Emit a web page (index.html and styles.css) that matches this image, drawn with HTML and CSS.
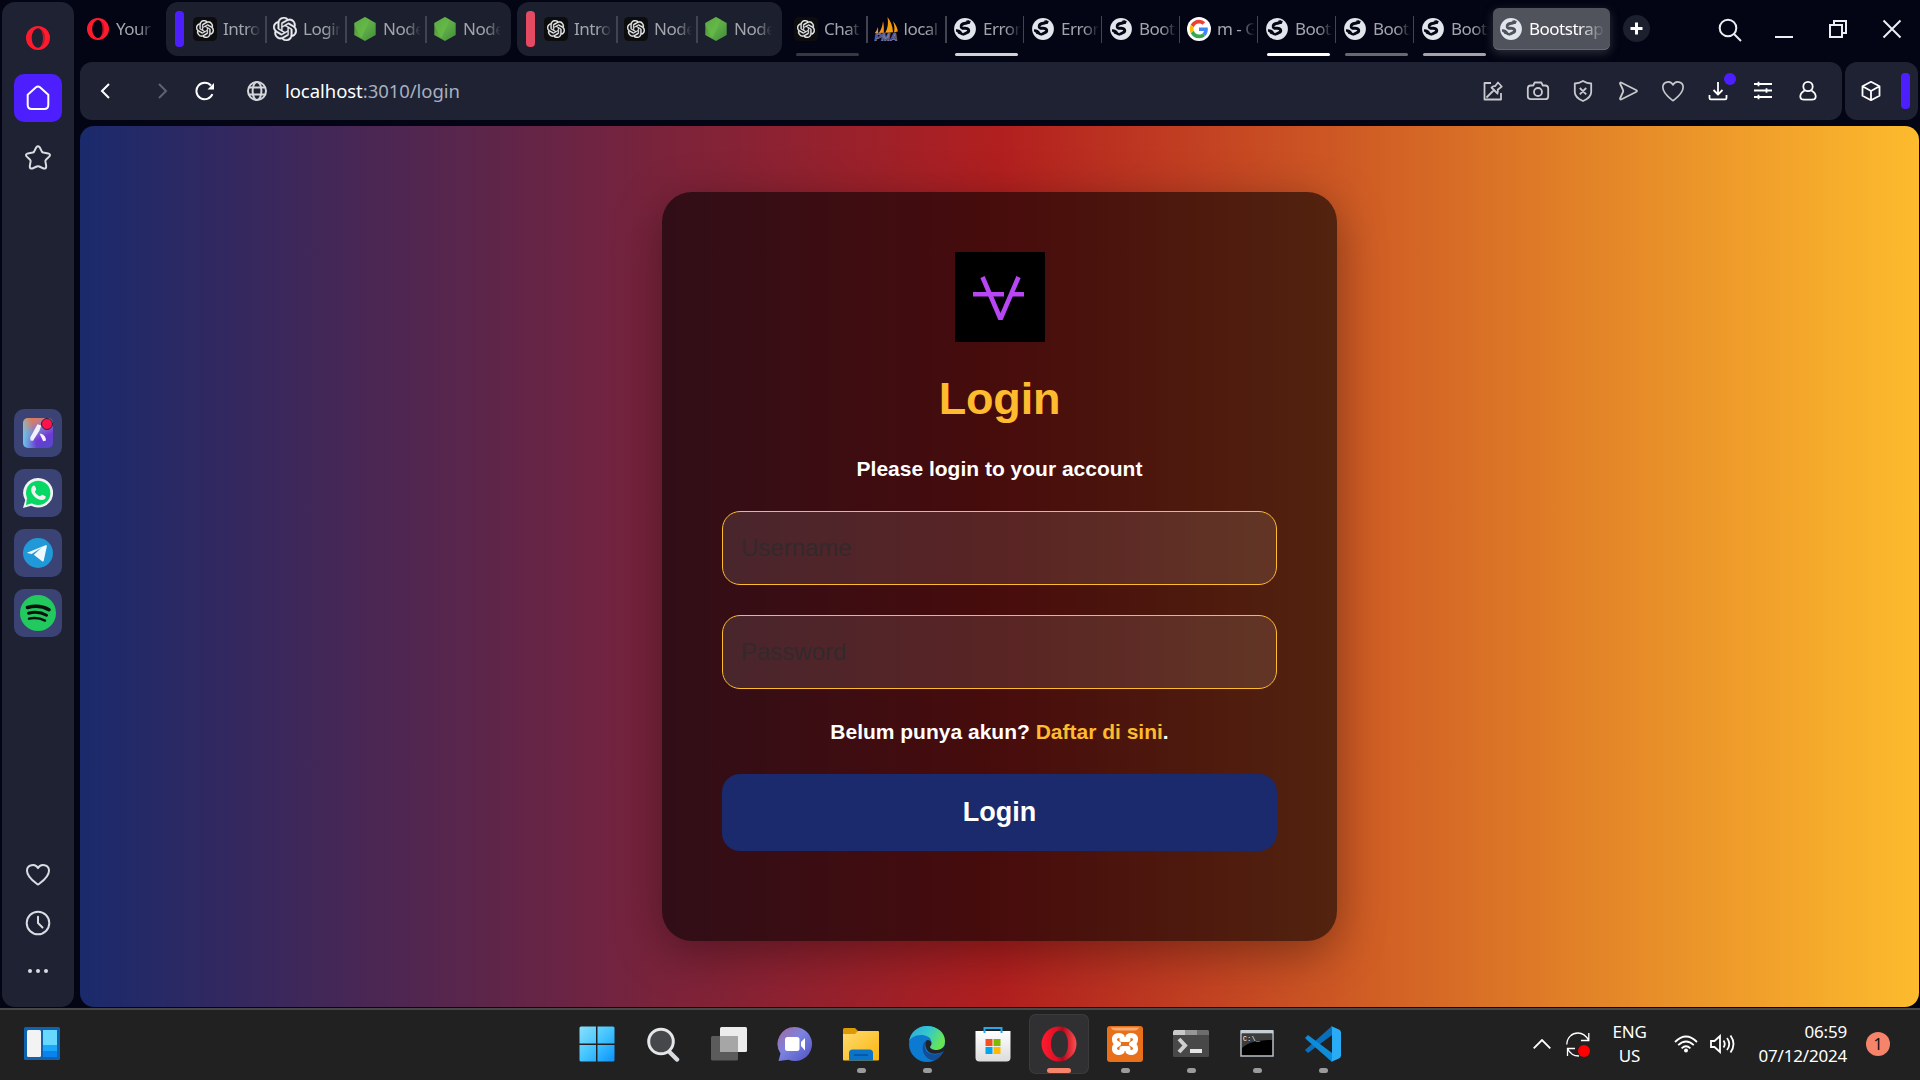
FILE: index.html
```html
<!DOCTYPE html>
<html lang="id">
<head>
<meta charset="utf-8">
<title>Login</title>
<link rel="stylesheet" href="styles.css">
</head>
<body>
<svg class="defs" width="0" height="0" aria-hidden="true">
  <defs>
    <linearGradient id="node-g" x1="0" y1="0" x2="1" y2="1"><stop offset="0" stop-color="#43873a"/><stop offset=".5" stop-color="#5fae45"/><stop offset="1" stop-color="#3f8b3d"/></linearGradient>
    <linearGradient id="win-g" x1="0" y1="0" x2="1" y2="1"><stop offset="0" stop-color="#8be0fb"/><stop offset=".5" stop-color="#44c4ff"/><stop offset="1" stop-color="#0a93fb"/></linearGradient>
    <linearGradient id="chat-g" x1="0" y1="0" x2="1" y2="1"><stop offset="0" stop-color="#a7679f"/><stop offset=".45" stop-color="#7b83df"/><stop offset="1" stop-color="#5150c4"/></linearGradient>
    <linearGradient id="folder-g" x1="0" y1="0" x2="1" y2="1"><stop offset="0" stop-color="#ffdb70"/><stop offset="1" stop-color="#f9b50d"/></linearGradient>
    <linearGradient id="edge-g" x1="0" y1="0" x2="1" y2=".4"><stop offset="0" stop-color="#2aa7e4"/><stop offset=".55" stop-color="#35c8cc"/><stop offset="1" stop-color="#68e555"/></linearGradient>
    <linearGradient id="opera-g" x1="0" y1="0" x2="1" y2="0"><stop offset="0" stop-color="#ff1b2d"/><stop offset=".45" stop-color="#dc1027"/><stop offset=".6" stop-color="#b3081c"/><stop offset="1" stop-color="#ff4e50"/></linearGradient>
    <linearGradient id="aria-g" x1="0" y1="0" x2=".5" y2="1"><stop offset="0" stop-color="#f07845"/><stop offset=".25" stop-color="#d07a72"/><stop offset=".5" stop-color="#7f7fce"/><stop offset=".8" stop-color="#7138d6"/><stop offset="1" stop-color="#5a45cc"/></linearGradient>
    <linearGradient id="aria-l" x1="0" y1=".7" x2="1" y2=".5"><stop offset="0" stop-color="#63dcea" stop-opacity=".8"/><stop offset=".4" stop-color="#63dcea" stop-opacity="0"/></linearGradient>
    <linearGradient id="paper-g" x1="0" y1="0" x2="0" y2="1"><stop offset="0" stop-color="#fff"/><stop offset="1" stop-color="#dcdcdc"/></linearGradient>
    <symbol id="opera" viewBox="0 0 24 24"><path fill="#ff1b2d" fill-rule="evenodd" d="M12 0a12 12 0 1 0 0 24 12 12 0 0 0 0-24zm0 2.2c3.2 0 5 4.4 5 9.8s-1.800 9.800-5 9.800-6.300-4.400-6.300-9.800S8.800 2.200 12 2.200z"/><path fill="#1b1420" opacity=".35" d="M14.500 3C17.800 4.500 19 8 18.800 12.600c-.3 4.600-1.800 7.200-4.300 8.400 2-1.400 2.900-5 2.900-9s-.9-7.600-2.900-9z"/></symbol>
    <symbol id="knot" viewBox="0 0 24 24"><path fill="currentColor" stroke="currentColor" stroke-width=".4" d="M22.2819 9.8211a5.9847 5.9847 0 0 0-.5157-4.9108 6.0462 6.0462 0 0 0-6.5098-2.9A6.0651 6.0651 0 0 0 4.9807 4.1818a5.9847 5.9847 0 0 0-3.9977 2.9 6.0462 6.0462 0 0 0 .7427 7.0966 5.98 5.98 0 0 0 .511 4.9107 6.051 6.051 0 0 0 6.5146 2.9001A5.9847 5.9847 0 0 0 13.2599 24a6.0557 6.0557 0 0 0 5.7718-4.2058 5.9894 5.9894 0 0 0 3.9977-2.9001 6.0557 6.0557 0 0 0-.7475-7.0729zm-9.022 12.6081a4.4755 4.4755 0 0 1-2.8764-1.0408l.1419-.0804 4.7783-2.7582a.7948.7948 0 0 0 .3927-.6813v-6.7369l2.02 1.1686a.071.071 0 0 1 .038.052v5.5826a4.504 4.504 0 0 1-4.4945 4.4944zm-9.6607-4.1254a4.4708 4.4708 0 0 1-.5346-3.0137l.142.0852 4.783 2.7582a.7712.7712 0 0 0 .7806 0l5.8428-3.3685v2.3324a.0804.0804 0 0 1-.0332.0615L9.74 19.9502a4.4992 4.4992 0 0 1-6.1408-1.6464zM2.3408 7.8956a4.485 4.485 0 0 1 2.3655-1.9728V11.6a.7664.7664 0 0 0 .3879.6765l5.8144 3.3543-2.0201 1.1685a.0757.0757 0 0 1-.071 0l-4.8303-2.7865A4.504 4.504 0 0 1 2.3408 7.872zm16.5963 3.8558L13.1038 8.364 15.1192 7.2a.0757.0757 0 0 1 .071 0l4.8303 2.7913a4.4944 4.4944 0 0 1-.6765 8.1042v-5.6772a.79.79 0 0 0-.407-.667zm2.0107-3.0231l-.142-.0852-4.7735-2.7818a.7759.7759 0 0 0-.7854 0L9.409 9.2297V6.8974a.0662.0662 0 0 1 .0284-.0615l4.8303-2.7866a4.4992 4.4992 0 0 1 6.6802 4.66zM8.3065 12.863l-2.02-1.1638a.0804.0804 0 0 1-.038-.0567V6.0742a4.4992 4.4992 0 0 1 7.3757-3.4537l-.142.0805L8.704 5.459a.7948.7948 0 0 0-.3927.6813zm1.0976-2.3654l2.602-1.4998 2.6069 1.4998v2.9994l-2.5974 1.4997-2.6067-1.4997Z"/></symbol>
    <symbol id="knot-dark" viewBox="0 0 24 24"><rect width="24" height="24" rx="4.500" fill="#0d0d0d"/><use href="#knot" x="3" y="3" width="18" height="18"/></symbol>
    <symbol id="node" viewBox="0 0 24 24"><path fill="url(#node-g)" d="M12 0l10.700 6v12L12 24 1.300 18V6z"/><path fill="#6cc24a" d="M12 0L1.300 6v2L8 21.500 17 2.800z" opacity=".55"/></symbol>
    <symbol id="globe" viewBox="0 0 24 24"><circle cx="12" cy="12" r="10.900" fill="#e1e6ec"/><g fill="none" stroke="var(--sea,#050716)" stroke-linejoin="round"><path stroke-width="2.900" d="M16.500 4.600L12.500 6.300Q8 6.800 8.200 9.700q.3 1.700 3 1.600 3.300-.3 4.300 1.200.9 2-1.700 3.300l-3 1.500"/><path stroke-width="2.600" d="M3 13.500q3.500-.2 4.700 2.200.6 1.600 3.300 1.800"/></g><path fill="var(--sea,#050716)" d="M2.800 13l4 1.200 2 3.300-3.300-.5zM13.500 3.200l4.300.8-1 2.800-3 .5z"/></symbol>
    <symbol id="pma" viewBox="0 0 24 24"><path fill="#f89c0e" d="M11.200 15.800C14 11 14.500 6 13.500 0c3 4 5.300 9 5.500 15.300zM20 15.200c.8-3 .5-7-1-11 3 3.500 4.500 7 4.800 10.200z"/><path fill="#f3921c" d="M4.800 16c2.700-3.600 3.800-7.600 4.200-12 .9 4 1 8 .8 11.700zM.8 16c1.500-1.600 2.400-3.600 3-6 .5 2 .4 4 .1 6z"/><text x="0.500" y="23.700" font-size="10.500" font-family="Liberation Sans" font-weight="700" font-style="italic" fill="#3b3e70" stroke="#a9abd0" stroke-width=".45" textLength="22.500">PMA</text></symbol>
    <symbol id="google" viewBox="0 0 48 48"><circle cx="24" cy="24" r="24" fill="#fff"/><g transform="translate(5.500 5.500) scale(.77)"><path fill="#EA4335" d="M24 9.500c3.540 0 6.710 1.220 9.210 3.600l6.850-6.850C35.900 2.380 30.470 0 24 0 14.620 0 6.510 5.380 2.560 13.220l7.980 6.190C12.430 13.720 17.740 9.500 24 9.500z"/><path fill="#4285F4" d="M46.980 24.550c0-1.570-.15-3.090-.38-4.550H24v9.020h12.940c-.58 2.960-2.260 5.480-4.780 7.180l7.730 6c4.510-4.180 7.090-10.360 7.090-17.650z"/><path fill="#FBBC05" d="M10.530 28.590c-.48-1.450-.76-2.990-.76-4.590s.27-3.140.76-4.590l-7.980-6.190C.92 16.460 0 20.120 0 24c0 3.880.92 7.540 2.560 10.780l7.970-6.190z"/><path fill="#34A853" d="M24 48c6.480 0 11.930-2.130 15.890-5.810l-7.730-6c-2.150 1.450-4.920 2.300-8.160 2.300-6.260 0-11.570-4.220-13.470-9.910l-7.980 6.190C6.510 42.620 14.620 48 24 48z"/></g></symbol>
    <symbol id="heart" viewBox="0 0 26 26"><path d="M13 23.500C10 21 2 16 2 9a5.800 5.800 0 0 1 11-2.600A5.800 5.800 0 0 1 24 9c0 7-8 12-11 14.500z"/></symbol>
  </defs>
</svg>

<div class="desktop">
  <div class="browser">
    <aside class="sidebar">
      <svg class="brand" viewBox="0 0 24 24"><use href="#opera"/></svg>
      <a class="side-btn home"><svg class="line" width="24" height="26" viewBox="0 0 24 26"><path d="M1.700 9.800L10 2.300q2-1.700 4 0l8.300 7.500V20q0 4-4 4H5.700q-4 0-4-4z"/></svg></a>
      <a class="side-btn star"><svg class="line dim" width="28" height="28" viewBox="0 0 28 28"><path d="M12.300 3.300q1.700-2 3.400 0l2.200 4.300q.5.800 1.400 1l4.900.8q2.800.8 1.200 3l-3.500 3.400q-.6.700-.5 1.600l.8 4.800q.1 2.800-2.600 2.300l-4.300-2q-1.300-.6-2.600 0l-4.300 2q-2.700.5-2.600-2.300l.8-4.800q.1-.9-.5-1.600l-3.500-3.400q-1.600-2.200 1.200-3l4.900-.8q.9-.2 1.400-1z"/></svg></a>
      <div class="apps">
        <a class="side-btn app"><svg width="30" height="30" viewBox="0 0 30 30"><rect width="30" height="30" rx="5" fill="url(#aria-g)"/><rect width="30" height="30" rx="5" fill="url(#aria-l)"/><path fill="#f3f0fa" d="M14.500 6.200l3.800 1.300-2 5.500-6.300 9.800-2.500-.2-.3-3z"/><path fill="#f3f0fa" d="M16.500 15.600c4 .4 6.300 3 6.500 6.900l-2.800.8z"/></svg><i class="alert"></i></a>
        <a class="side-btn app"><svg width="30" height="30" viewBox="0 0 30 30"><path fill="#f1f3f3" d="M15.200 0a14.800 14.800 0 1 1-7 27.800L0 30l2.200-7.800A14.800 14.800 0 0 1 15.200 0z"/><circle cx="15.200" cy="14.900" r="12.200" fill="#06d765"/><path fill="#06d765" d="M4 20l-1 7 7-2z"/><path fill="#f1f3f3" d="M9.500 8.200c1-1 2-.8 2.500.1l1.200 2.800c.3.800-1.400 2.200-1.200 2.800 1 2 2.600 3.500 4.700 4.400.8.300 2-1.800 2.800-1.500l2.900 1.400c.8.500.2 2-.6 2.800-4.500 3.700-14.500-3.500-13.600-9.700.1-1.200.6-2.300 1.300-3.100z"/></svg></a>
        <a class="side-btn app"><svg width="30" height="30" viewBox="0 0 30 30"><circle cx="15" cy="15" r="15" fill="#2199d8"/><path fill="#fff" opacity=".93" d="M4 14.800l18.500-7.500c1-.3 1.500.1 1.300 1.200l-3 14c-.2 1-.9 1.200-1.700.7l-8.300-6.500 7.600-6.900-9.700 6.300-4.600-1q-.5-.1-.1-.3z"/></svg></a>
        <a class="side-btn app"><svg width="36" height="36" viewBox="0 0 36 36"><circle cx="18" cy="18" r="18" fill="#22c95e"/><g fill="none" stroke="#0c1110" stroke-linecap="round"><path stroke-width="3.600" d="M7.500 12.500c7-2 15.500-1.300 21.500 2.200"/><path stroke-width="3" d="M8.500 18.200c6-1.600 13-.9 18 2"/><path stroke-width="2.400" d="M9 23.700c5.500-1.200 11-.7 16 1.900"/></g></svg></a>
      </div>
      <div class="side-end">
        <svg class="line dim" width="26" height="25" viewBox="0 0 26 26" preserveAspectRatio="none"><use href="#heart"/></svg>
        <svg class="line dim" width="26" height="26" viewBox="0 0 26 26"><circle cx="13" cy="13" r="11.300"/><path d="M13 6.800V13l4.500 4.500"/></svg>
        <svg width="22" height="6" viewBox="0 0 22 6" fill="#d9dce3"><circle cx="3" cy="3" r="2"/><circle cx="11" cy="3" r="2"/><circle cx="19" cy="3" r="2"/></svg>
      </div>
    </aside>

    <div class="column">
      <header class="tabs">
        <div class="tab first"><svg class="fav small"><use href="#opera"/></svg><span class="label">Your</span></div>
        <div class="group g1">
          <i class="bar violet"></i>
          <div class="tab"><svg class="fav"><use href="#knot-dark"/></svg><span class="label">Intro</span></div>
          <div class="tab sep"><svg class="fav"><use href="#knot"/></svg><span class="label">Login</span></div>
          <div class="tab sep"><svg class="fav"><use href="#node"/></svg><span class="label">Node</span></div>
          <div class="tab sep"><svg class="fav"><use href="#node"/></svg><span class="label">Node</span></div>
        </div>
        <div class="group g2">
          <i class="bar pink"></i>
          <div class="tab"><svg class="fav"><use href="#knot-dark"/></svg><span class="label">Intro</span></div>
          <div class="tab sep"><svg class="fav"><use href="#knot-dark"/></svg><span class="label">Node</span></div>
          <div class="tab sep"><svg class="fav"><use href="#node"/></svg><span class="label">Node</span></div>
        </div>
        <div class="loose">
          <div class="tab wide"><svg class="fav"><use href="#knot-dark"/></svg><span class="label">Chat</span><i class="under u1"></i></div>
          <div class="tab wide sep"><svg class="fav"><use href="#pma"/></svg><span class="label">local</span></div>
          <div class="tab sep"><svg class="fav"><use href="#globe"/></svg><span class="label">Error</span><i class="under u2"></i></div>
          <div class="tab sep thin"><svg class="fav"><use href="#globe"/></svg><span class="label">Error</span></div>
          <div class="tab sep thin"><svg class="fav"><use href="#globe"/></svg><span class="label">Boots</span></div>
          <div class="tab sep thin"><svg class="fav"><use href="#google"/></svg><span class="label">m - G</span></div>
          <div class="tab sep thin"><svg class="fav"><use href="#globe"/></svg><span class="label">Boots</span><i class="under u3"></i></div>
          <div class="tab sep thin"><svg class="fav"><use href="#globe"/></svg><span class="label">Boots</span><i class="under u4"></i></div>
          <div class="tab sep thin"><svg class="fav"><use href="#globe"/></svg><span class="label">Boots</span><i class="under u5"></i></div>
        </div>
        <div class="tab active"><svg class="fav"><use href="#globe"/></svg><span class="label">Bootstrap</span></div>
        <a class="add"><svg width="13" height="13" viewBox="0 0 13 13"><path d="M6.500.5v12M.5 6.500h12" stroke="#fff" stroke-width="3"/></svg></a>
        <div class="window-btns">
          <svg width="24" height="24" viewBox="0 0 24 24"><circle cx="10" cy="10" r="8.300"/><path d="M16 16l7 7"/></svg>
          <svg width="20" height="20" viewBox="0 0 20 20"><path d="M1 18h18"/></svg>
          <svg width="20" height="20" viewBox="0 0 20 20"><path d="M2 6h12v12H2zM6 6V2h12v12h-4"/></svg>
          <svg width="20" height="20" viewBox="0 0 20 20"><path d="M1.500 1.500l17 17M18.500 1.500l-17 17"/></svg>
        </div>
      </header>

      <div class="toolbar">
        <div class="address">
          <svg class="nav back" width="10" height="16" viewBox="0 0 10 16"><path d="M9 1L2 8l7 7"/></svg>
          <svg class="nav fwd" width="10" height="16" viewBox="0 0 10 16"><path d="M1 1l7 7-7 7"/></svg>
          <svg class="nav reload" width="20" height="20" viewBox="0 0 20 20"><path d="M17.400 13.200A8.300 8.300 0 1 1 16 4.500"/><path fill="#fff" stroke="none" d="M19 2v6.500h-6.500z"/></svg>
          <svg class="nav site" width="20" height="20" viewBox="0 0 20 20"><circle cx="10" cy="10" r="9"/><ellipse cx="10" cy="10" rx="4.400" ry="9"/><path d="M1.800 6.600h16.400M1.800 13.400h16.400"/></svg>
          <div class="url"><b>localhost</b>:3010/login</div>
          <div class="tools">
            <svg viewBox="0 0 24 24"><path d="M10 4H3.500v16.500H20V14M5.500 18.500l7-7M10.500 8.500l6 6q1-2 .2-3.800l4-3.200L17 3.500l-3 3.700q-2-.3-3.500 1.300z"/></svg>
            <svg viewBox="0 0 24 24"><path d="M1.800 9.500q0-3 3-3h2.400l1.500-3h6.600l1.500 3h2.400q3 0 3 3v7.700q0 3-3 3H4.800q-3 0-3-3z"/><circle cx="12" cy="13" r="4"/></svg>
            <svg viewBox="0 0 24 24"><path d="M12 2q4 2.500 8.200 2.500V13q0 5.500-8.200 9-8.200-3.500-8.200-9V4.500Q8 4.500 12 2zM8.800 9l6.400 6.400M15.200 9l-6.400 6.400"/></svg>
            <svg viewBox="0 0 24 24"><path d="M4 4.500q0-1.500 1.600-.8L20 11q2 1 0 2L5.600 20.300q-1.600.7-1.600-.8l3-6.500q.5-1 0-2z"/></svg>
            <svg viewBox="0 0 26 26"><use href="#heart"/></svg>
            <span class="badged"><svg class="bright" viewBox="0 0 24 24"><path d="M12 3v12M7.500 11l4.500 4.500 4.500-4.500M3.500 16v3q0 1.300 1.300 1.300h14.400q1.300 0 1.300-1.300v-3"/></svg><i></i></span>
            <svg class="bright" viewBox="0 0 24 24"><path d="M3 5h18M3 11.500h18M3 18h18M7.500 2.800v4.400M15.500 9.300v4.400M7.500 15.800v4.400"/></svg>
            <svg class="bright" viewBox="0 0 24 24"><circle cx="12" cy="7.500" r="4.700"/><path d="M8.700 11.500Q4 14 4.300 18q.3 2.700 4 2.700h7.400q3.700 0 4-2.700.3-4-4.400-6.500"/></svg>
          </div>
        </div>
        <div class="extra">
          <svg width="20" height="22" viewBox="0 0 20 22"><path d="M10 1.800l8.500 4.400v9.600L10 20.200l-8.500-4.400V6.200zM1.500 6.200L10 11l8.500-4.800M10 11v9"/></svg>
          <i></i>
        </div>
      </div>

      <main class="page">
        <form class="card">
          <svg class="logo" viewBox="0 0 90 90"><rect width="90" height="90"/><g fill="none" stroke="#b946f5" stroke-width="4.600"><path d="M27.500 25L45.500 67 63.500 25" stroke-linejoin="bevel"/><path d="M18 42.200h31M57 42.200h12"/></g></svg>
          <h1>Login</h1>
          <p class="lead">Please login to your account</p>
          <input type="text" placeholder="Username">
          <input type="password" placeholder="Password">
          <p class="signup">Belum punya akun? <a>Daftar di sini</a>.</p>
          <button type="button">Login</button>
        </form>
      </main>
    </div>
  </div>

  <footer class="taskbar">
    <div class="widgets"><svg width="36" height="33" viewBox="0 0 36 33"><rect width="36" height="33" rx="1.500" fill="#0f62b0"/><rect x="3" y="3" width="14" height="27" rx="1.500" fill="#f3f3f3"/><path fill="#67d8ff" d="M19 3h14v15H19z"/><path fill="#1aa7fb" d="M19 18h14v6H19z"/><path fill="#0a83ec" d="M19 24h14v6H19z"/></svg></div>
    <nav class="dock">
      <a><svg viewBox="0 0 36 36"><path fill="url(#win-g)" d="M.5 2a1.500 1.500 0 0 1 1.500-1.500h15v17H.5zM18.500.5h15.500a1.500 1.500 0 0 1 1.500 1.500v15.500h-17zM.5 19h16.500v16.500H2A1.500 1.500 0 0 1 .5 34zM18.500 19h17v15a1.500 1.500 0 0 1-1.500 1.500H18.500z"/></svg></a>
      <a><svg viewBox="0 0 36 36"><path d="M23.500 25l8.500 8.500" stroke="#d8dbdd" stroke-width="4.500" stroke-linecap="round"/><circle cx="16" cy="15.500" r="12.300" fill="#45474a" stroke="#e4e6e8" stroke-width="3"/></svg></a>
      <a><svg viewBox="0 0 36 36"><rect x="9" y="1" width="27" height="25" rx="1.500" fill="#ececec"/><rect y="10" width="27" height="24.500" rx="1.500" fill="#5b5b5b"/><path fill="#a6a6a6" d="M9 10h18v16H9z"/></svg></a>
      <a><svg viewBox="0 0 36 36"><path fill="url(#chat-g)" d="M18 1a17 17 0 1 1-6.500 32.700L1.500 35l2-7.500A17 17 0 0 1 18 1z"/><rect x="8" y="11" width="14.500" height="14" rx="2.500" fill="#fff"/><path fill="#fff" d="M24 16l4-4v12.500L24 20z"/></svg></a>
      <a class="on"><svg viewBox="0 0 36 36"><path fill="#dc9a06" d="M0 3.500A1.500 1.500 0 0 1 1.500 2H12l4 4-4 4H0z"/><path fill="url(#folder-g)" d="M0 8h12l3-3h20a1 1 0 0 1 1 1v27.500a1 1 0 0 1-1 1H1a1 1 0 0 1-1-1z"/><path fill="#0a74cb" d="M6 34.500V27q0-3.500 3.500-3.500h17q3.500 0 3.500 3.500v7.500z"/><path stroke="#07509a" stroke-width="1.500" d="M11 29h14"/></svg></a>
      <a class="on"><svg viewBox="0 0 36 36"><circle cx="18" cy="18" r="18" fill="#0b7ad0"/><path fill="url(#edge-g)" d="M0 16C1 6 9 0 18 0c11 0 18 7 18 15 0 6-4 9-8.500 9-4 0-6.500-1.500-6.500-3 0-1 1.500-1.500 1.500-5C22 11 17 9 12 9 6 9 1 12 0 16z"/><path fill="#134d96" d="M14 19c-2 8 4 15 11 15.500C29 33 32.500 29.500 34 26c-6 4-15 3-17.500-2.500C15 20 15.500 17 18 14c-2 1-3.500 3-4 5z"/><path fill="#232326" d="M18 14c2.500 0 4.300 1 4.500 3.500 0 2-1.500 2.500-1.500 3.500 0 1.500 2.500 3 6.500 3 3.500 0 7-1.500 8.500-5v5l-2.500 2c-5 2.500-12.500 2.500-15-1.500-2.500-3.500-3-7.500-.5-10.500z"/></svg></a>
      <a><svg viewBox="0 0 36 36"><path fill="url(#paper-g)" d="M.5 5h35v26.500q0 4-4 4h-27q-4 0-4-4z"/><path fill="none" stroke="#27a9e8" stroke-width="2" d="M9.500 7V2h17v5"/><path fill="#f25022" d="M10.500 13h7v7h-7z"/><path fill="#7fba00" d="M18.500 13h7v7h-7z"/><path fill="#00a4ef" d="M10.500 21h7v7h-7z"/><path fill="#ffb900" d="M18.500 21h7v7h-7z"/></svg></a>
      <a class="current on"><svg viewBox="0 0 36 36"><path fill="url(#opera-g)" fill-rule="evenodd" d="M18 .5a17.500 17.500 0 1 0 0 35 17.500 17.500 0 0 0 0-35zM19 4.500c5 0 8 6 8 13.500s-3 13.500-8 13.500-9-6-9-13.500 4-13.500 9-13.500z"/></svg></a>
      <a class="on"><svg viewBox="0 0 36 36"><rect width="36" height="36" rx="3" fill="#e8701a"/><path fill="#f7ac76" d="M4 1.500h28q-1 3-5 3H9q-4 0-5-3z"/><path fill="none" stroke="#fff" stroke-width="5" stroke-linejoin="round" d="M15 10.500c-2-2-8-1-7.500 3 0 2.500 2 4 4 4.500-2 .5-4 2-4 4.500-.5 4 5.500 5 7.500 3v-3h6v3c2 2 8 1 7.500-3 0-2.500-2-4-4-4.500 2-.5 4-2 4-4.500.5-4-5.500-5-7.500-3v3h-6z"/></svg></a>
      <a class="on"><svg viewBox="0 0 36 36"><rect y="4" width="36" height="27" rx="1.500" fill="#484848"/><path fill="#c9c9c9" d="M1.500 4H12v5H0V5.500z"/><path fill="#979797" d="M12 4h12v5H12z"/><path fill="#6d6d6d" d="M24 4h11l1 1.500V9H24z"/><path fill="none" stroke="#d0d0d0" stroke-width="4" d="M6 13l6 6.500L6 26"/><path fill="#e5e5e5" d="M17 23h12v4H17z"/></svg></a>
      <a class="on"><svg viewBox="0 0 36 36"><path fill="#000" stroke="#b9c0c7" stroke-width="1.500" d="M2 5h32v25H2z"/><path fill="#c5cdd5" d="M2 4h32v3.500H2z"/><path fill="#3c3c3c" d="M3 8h30v6C20 14 9 16 3 22z"/><text x="4" y="14.500" font-size="6.500" font-family="Liberation Mono" fill="#fff" textLength="17">C:\_</text></svg></a>
      <a class="on"><svg viewBox="0 0 36 36"><path fill="#0a6eb8" d="M0 24l3 3L27 9V0z"/><path fill="#0f8cd8" d="M0 12l3-3 24 18v9L2 14z"/><path fill="#2aabf5" d="M26 0l8 3.500q2 1 2 3v23q0 2-2 3L26 36q1-.5 1-2V2q0-1.500-1-2z"/></svg></a>
    </nav>
    <div class="tray">
      <svg class="chev" width="18" height="10" viewBox="0 0 18 10"><path d="M.7 9.300L9 1l8.300 8.300"/></svg>
      <span class="sync"><svg width="24" height="25" viewBox="0 0 24 25"><path d="M.8 12.500C1 5.500 6 1 12 1c5 0 8 2.500 10.800 7.500M22.800 1v7.500H15M1.500 24v-7.500H9M1.500 16.500C4 22 8 24 13 24"/></svg><i></i></span>
      <div class="lang">ENG<br>US</div>
      <svg class="wifi" width="24" height="18" viewBox="0 0 24 18"><path d="M1 7q11-11 22 0M4.200 10.200q7.800-7.400 15.600 0M7.600 13.300q4.400-4 8.800 0"/><circle cx="12" cy="15.500" r="2" fill="#fff" stroke="none"/></svg>
      <svg class="vol" width="25" height="20" viewBox="0 0 25 20"><path d="M1 7v6h3.500l5.500 5V2L4.500 7zM13.500 6.500q2.500 3.500 0 7M17 4q4.500 6 0 12M20.500 1.500q6 8.500 0 17"/></svg>
      <div class="clock">06:59<br>07/12/2024</div>
      <span class="count">1</span>
    </div>
  </footer>
</div>
</body>
</html>
```
FILE: styles.css
```css
* { box-sizing: border-box; }

body {
  margin: 0;
  background: #030514;
  font-family: "Noto Sans", "Open Sans", sans-serif;
  overflow: hidden;
}

svg { display: block; flex: none; }
.defs { position: absolute; }

.desktop { display: flex; flex-direction: column; width: 1920px; height: 1080px; }
.browser { display: flex; gap: 6px; height: 1008px; padding: 0 0 1px 2px; }

/* Sidebar */
.sidebar {
  display: flex;
  flex-direction: column;
  align-items: center;
  width: 72px;
  margin-top: 2px;
  padding: 24px 0 33px;
  border-radius: 13px;
  background: #1e2233;
}
.brand { width: 24px; height: 24px; margin-bottom: 24px; }
.side-btn { position: relative; display: grid; place-items: center; width: 48px; height: 48px; border-radius: 10px; }
.home { background: #4d1fff; }
.star { margin-top: 12px; }
.line { fill: none; stroke: #fff; stroke-width: 2; stroke-linecap: round; stroke-linejoin: round; }
.dim { stroke: #d9dce3; }
.apps { display: grid; gap: 12px; margin-top: 227px; }
.app { background: #3a4374; }
.alert { position: absolute; top: 9px; right: 9px; width: 12px; height: 12px; border: 1.500px solid #2a2137; border-radius: 50%; background: #ff134d; }
.side-end { display: flex; flex-direction: column; align-items: center; gap: 23px; margin-top: auto; }
.side-end svg:last-child { margin-top: 9px; }

/* Tab strip */
.column { display: flex; flex-direction: column; flex: 1; min-width: 0; }
.tabs { display: flex; height: 62px; padding: 2px 0 0 6px; color: #a3a5ac; font-size: 17px; letter-spacing: -.5px; }
.tab { position: relative; display: flex; align-items: center; gap: 6px; flex: none; width: 80px; height: 54px; }
.fav { width: 24px; height: 24px; color: #eceef1; }
.small { width: 22px; height: 22px; margin: 0 1px; }
.label {
  width: 38px;
  padding-bottom: 2px;
  overflow: hidden;
  white-space: nowrap;
  -webkit-mask-image: linear-gradient(90deg, #000 60%, transparent);
  mask-image: linear-gradient(90deg, #000 60%, transparent);
}
.sep::before { content: ""; position: absolute; left: -8px; top: 14px; width: 2px; height: 27px; background: #42444f; }
.thin::before { width: 1px; }
.group { display: flex; align-items: center; height: 54px; border-radius: 12px; background: #1c1f2e; overflow: hidden; }
.g1 { width: 345px; padding-left: 9px; }
.g2 { width: 265px; padding-left: 9px; margin-left: 6px; }
.bar { flex: none; width: 9px; height: 36px; margin-right: 9px; border-radius: 4px; }
.violet { background: #4d1fff; }
.pink { background: #e44b62; }
.loose { display: flex; margin-left: 12px; }
.loose .tab { width: 78px; }
.loose .wide { width: 79.500px; }
.under { position: absolute; left: 2px; bottom: 0; width: 63px; height: 3px; border-radius: 2px; }
.u1 { background: #363844; }
.u2 { background: #d3d3d3; }
.u3 { background: #fff; }
.u4 { background: #676973; }
.u5 { background: #a3a3a8; }
.tabs .active {
  --sea: #50525c;
  width: 117px;
  height: 42px;
  margin: 6px 0 0 -6px;
  padding-left: 6px;
  border-radius: 6px;
  background: #50525c;
  box-shadow: 0 3px 10px #50525c88, inset 0 -1px #676973;
  color: #fff;
}
.active .label { width: 76px; -webkit-mask-image: linear-gradient(90deg, #000 65%, transparent); mask-image: linear-gradient(90deg, #000 65%, transparent); }
.add { display: grid; place-items: center; width: 27px; height: 27px; margin: 13px 0 0 13px; border-radius: 50%; background: #1c1f2e; }
.window-btns { display: flex; align-items: center; gap: 34px; height: 54px; margin-left: auto; padding-right: 18px; }
.window-btns svg { fill: none; stroke: #eceef3; stroke-width: 2; }
.window-btns svg:first-child { margin: 2px -2px 0 0; }

/* Toolbar */
.toolbar { display: flex; gap: 3px; height: 58px; margin-right: 2px; }
.address { display: flex; align-items: center; width: 1762px; padding: 0 22px 0 20px; border-radius: 12px; background: #1e2233; }
.nav { fill: none; stroke: #fff; stroke-width: 2; }
.back { margin-right: 48px; }
.fwd { margin-right: 27px; stroke: #5f6270; }
.reload { margin-right: 32px; }
.site { margin-right: 18px; stroke: #d5d7da; }
.url { margin-top: -2px; color: #a7b0c0; font-size: 18.500px; letter-spacing: -.05px; }
.url b { color: #fff; font-weight: 400; }
.tools { display: flex; gap: 21px; margin-left: auto; }
.tools svg { width: 24px; height: 24px; fill: none; stroke: #c7c9cc; stroke-width: 1.800; stroke-linejoin: round; }
.tools .bright { stroke: #fff; }
.badged { position: relative; }
.badged i { position: absolute; left: 18px; top: -6px; width: 12px; height: 12px; border-radius: 50%; background: #4d1fff; }
.extra { display: flex; align-items: center; justify-content: space-between; flex: 1; padding: 0 8px 0 16px; border-radius: 12px; background: #1e2233; }
.extra svg { fill: none; stroke: #fff; stroke-width: 1.800; stroke-linejoin: round; }
.extra i { width: 9px; height: 36px; border-radius: 4px; background: #4d1fff; }

/* Login page */
.page {
  display: grid;
  place-items: center;
  flex: 1;
  margin: 6px 1px 0 0;
  border-radius: 14px;
  background: linear-gradient(to right, #1a2a6c, #b21f1f, #fdbb2d);
  font-family: "Liberation Sans", Arial, sans-serif;
  overflow: hidden;
}
.card {
  display: flex;
  flex-direction: column;
  align-items: center;
  width: 675px;
  height: 749px;
  padding: 60px;
  border-radius: 30px;
  background: rgba(0, 0, 0, .6);
  box-shadow: 0 12px 48px rgba(0, 0, 0, .37);
  color: #fff;
}
.logo { width: 90px; height: 90px; }
.card h1 { margin: 31px 0 0; color: #fdbb2d; font-size: 45px; line-height: 52px; letter-spacing: -.2px; }
.card p { margin: 0; font-size: 21px; line-height: 24px; font-weight: 700; }
.card .lead { padding: 32px 0 30px; }
.card input {
  width: 100%;
  height: 74px;
  margin: 0 0 30px;
  padding: 0 18px;
  border: 1px solid #fdbb2d;
  border-radius: 18px;
  background: rgba(255, 255, 255, .1);
  font: 24px "Liberation Sans", Arial, sans-serif;
}
.card input::placeholder { color: #33292c; opacity: 1; }
.card .signup { padding-top: 1px; }
.signup a { color: #fdbb2d; }
.card button {
  width: 100%;
  height: 77px;
  margin-top: 30px;
  border: 0;
  border-radius: 18px;
  background: #1a2a6c;
  color: #fff;
  font: 700 27px "Liberation Sans", Arial, sans-serif;
}

/* Taskbar */
.taskbar { display: flex; height: 72px; border-top: 2px solid #484848; background: #212122; }
.widgets { width: 567px; padding: 17px 0 0 24px; }
.dock { display: flex; gap: 6px; padding-top: 4px; }
.dock a { position: relative; width: 60px; height: 60px; padding: 12px; }
.dock svg { width: 36px; height: 36px; }
.on::after { content: ""; position: absolute; left: 26px; bottom: 1px; width: 9px; height: 5px; border-radius: 3px; background: #9b9b9c; }
.current { border-radius: 7px; background: #303032; box-shadow: inset 0 0 0 1px #3b3b3d; }
.current::after { left: 18px; width: 24px; background: #f5846a; }
.tray { display: flex; align-items: center; flex: 1; padding: 0 0 2px 180px; color: #fff; font-size: 17px; line-height: 24px; letter-spacing: -.2px; }
.tray svg { fill: none; stroke: #fff; stroke-width: 1.800; }
.chev { margin-right: 15px; }
.sync { position: relative; margin-right: 20px; }
.sync svg { stroke-width: 1.300; }
.sync i { position: absolute; right: 0; bottom: 0; width: 12px; height: 12px; border-radius: 50%; background: red; }
.lang { width: 39px; margin-right: 25px; text-align: center; }
.wifi { margin-right: 12px; }
.clock { width: 112px; text-align: right; white-space: nowrap; }
.count { width: 24px; height: 24px; margin-left: 19px; border-radius: 50%; background: #f5846a; color: #111; font-size: 16px; text-align: center; }
```
